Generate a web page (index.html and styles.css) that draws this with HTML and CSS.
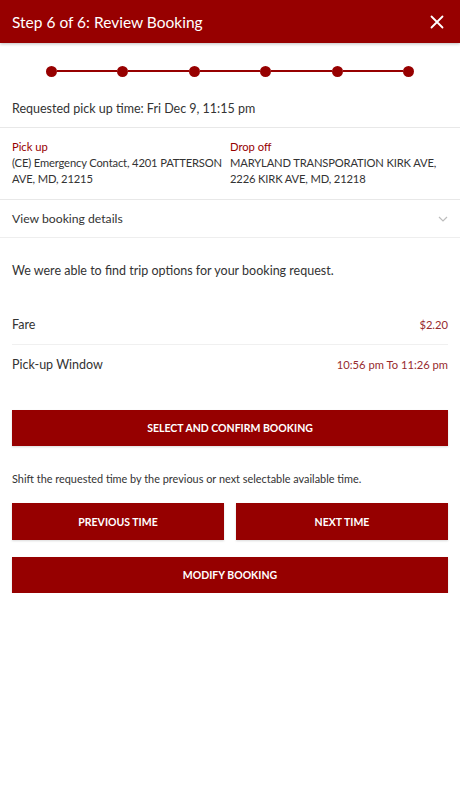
FILE: index.html
```html
<!DOCTYPE html>
<html>
<head>
<meta charset="utf-8">
<link rel="stylesheet" href="styles.css">
</head>
<body>
<header class="topbar">
  <h1 class="title">Step 6 of 6: Review Booking</h1>
  <svg class="close" width="14" height="14" viewBox="0 0 14 14"><path d="M1.5 1.5 L12.5 12.5 M12.5 1.5 L1.5 12.5" stroke="#fff" stroke-width="1.8" stroke-linecap="round"/></svg>
</header>

<div class="stepper">
  <span class="dot"></span><span class="seg"></span>
  <span class="dot"></span><span class="seg"></span>
  <span class="dot"></span><span class="seg"></span>
  <span class="dot"></span><span class="seg"></span>
  <span class="dot"></span><span class="seg"></span>
  <span class="dot"></span>
</div>

<p class="requested">Requested pick up time: Fri Dec 9, 11:15 pm</p>

<div class="places">
  <div class="place">
    <div class="label">Pick up</div>
    <div class="addr">(CE) Emergency Contact, 4201 PATTERSON AVE, MD, 21215</div>
  </div>
  <div class="place">
    <div class="label">Drop off</div>
    <div class="addr">MARYLAND TRANSPORATION KIRK AVE, 2226 KIRK AVE, MD, 21218</div>
  </div>
</div>

<div class="details">
  <span>View booking details</span>
  <svg width="10" height="6" viewBox="0 0 10 6"><path d="M1 1 L5 5 L9 1" fill="none" stroke="#bdbdbd" stroke-width="1.2"/></svg>
</div>

<p class="found">We were able to find trip options for your booking request.</p>

<div class="rows">
  <div class="row"><span>Fare</span><span class="val">$2.20</span></div>
  <div class="row"><span>Pick-up Window</span><span class="val">10:56 pm To 11:26 pm</span></div>
</div>

<div class="actions">
  <button class="btn">SELECT AND CONFIRM BOOKING</button>
  <p class="shift">Shift the requested time by the previous or next selectable available time.</p>
  <div class="pair">
    <button class="btn">PREVIOUS TIME</button>
    <button class="btn">NEXT TIME</button>
  </div>
  <button class="btn modify">MODIFY BOOKING</button>
</div>
</body>
</html>
```

FILE: styles.css
```css
* { box-sizing: border-box; }
html, body { margin: 0; padding: 0; background: #fff; }
body {
  font-family: Lato, "Noto Sans", sans-serif;
  color: #333;
  width: 460px;
}
.topbar {
  height: 43px;
  background: #970000;
  display: flex;
  align-items: center;
  justify-content: space-between;
  padding: 0 16px 0 12px;
  box-shadow: 0 1px 3px rgba(0,0,0,0.25);
}
.title {
  margin: 0;
  font-size: 15.5px;
  font-weight: 400;
  color: #fff;
}
.close { display: block; }
.stepper {
  display: flex;
  align-items: center;
  margin: 23px 46px 0 46px;
  height: 10px;
}
.dot {
  width: 11px;
  height: 11px;
  border-radius: 50%;
  background: #970000;
  flex: none;
}
.seg {
  flex: 1;
  height: 2px;
  background: #970000;
}
.requested {
  margin: 0;
  padding: 25px 12px 10px;
  font-size: 12.5px;
  line-height: 16px;
  border-bottom: 1px solid #e8e8e8;
}
.places {
  display: grid;
  grid-template-columns: 213px 1fr;
  column-gap: 5px;
  padding: 11px 12px 12px;
  border-bottom: 1px solid #e8e8e8;
  font-size: 11.2px;
  line-height: 16px;
}
.addr { letter-spacing: -0.15px; }
.label { color: #970000; }
.details {
  display: flex;
  justify-content: space-between;
  align-items: center;
  height: 38px;
  padding: 0 12px;
  font-size: 12.2px;
  border-bottom: 1px solid #eeeeee;
}
.found {
  margin: 0;
  padding: 25px 12px 0;
  font-size: 12.5px;
  line-height: 16px;
}
.rows {
  margin: 25px 12px 0;
}
.row {
  display: flex;
  justify-content: space-between;
  align-items: center;
  height: 40px;
  font-size: 12.5px;
}
.row + .row { border-top: 1px solid #f0f0f0; }
.val { color: #972a2e; font-size: 11.2px; }
.actions {
  padding: 26px 12px 0;
}
.btn {
  display: block;
  width: 100%;
  height: 36px;
  border: none;
  background: #960000;
  color: #fff;
  font-family: Lato, "Noto Sans", sans-serif;
  font-weight: 700;
  font-size: 10.5px;
  padding: 0;
  box-shadow: 0 1px 2px rgba(0,0,0,0.15);
}
.shift {
  margin: 0;
  padding: 26px 0 17px;
  font-size: 10.9px;
  line-height: 14px;
}
.pair {
  display: grid;
  grid-template-columns: 1fr 1fr;
  column-gap: 12px;
}
.pair .btn { height: 37px; }
.modify { margin-top: 17px; }
```
